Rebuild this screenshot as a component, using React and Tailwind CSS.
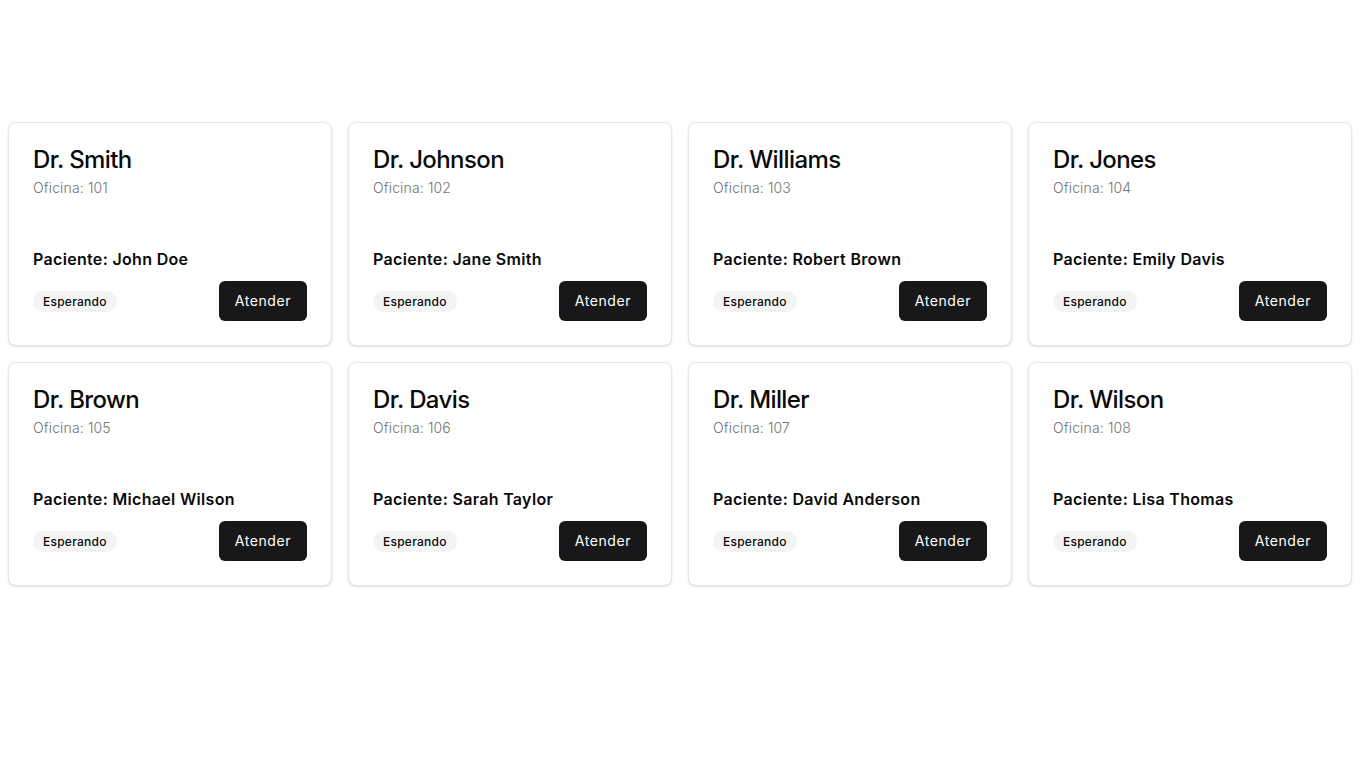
import React from 'react';

const offices = [
  { doctor: 'Dr. Smith', office: 101, patient: 'John Doe' },
  { doctor: 'Dr. Johnson', office: 102, patient: 'Jane Smith' },
  { doctor: 'Dr. Williams', office: 103, patient: 'Robert Brown' },
  { doctor: 'Dr. Jones', office: 104, patient: 'Emily Davis' },
  { doctor: 'Dr. Brown', office: 105, patient: 'Michael Wilson' },
  { doctor: 'Dr. Davis', office: 106, patient: 'Sarah Taylor' },
  { doctor: 'Dr. Miller', office: 107, patient: 'David Anderson' },
  { doctor: 'Dr. Wilson', office: 108, patient: 'Lisa Thomas' }
];

function OfficeCard({ doctor, office, patient }) {
  return (
    <div className="flex h-[224px] flex-col rounded-lg border border-[#e5e5e5] bg-white text-[#0a0a0a] shadow-sm">
      <div className="flex flex-col gap-1.5 px-6 pt-[25px]">
        <h3 className="text-2xl font-medium leading-none tracking-tight">{doctor}</h3>
        <p className="text-sm font-light tracking-[0.01em] text-[#737373]">Oficina: {office}</p>
      </div>
      <div className="mt-auto flex flex-col gap-2.5 px-6 pb-6">
        <p className="text-base font-semibold tracking-[0.02em]">Paciente: {patient}</p>
        <div className="flex items-center justify-between">
          <span className="rounded-full bg-[#f4f4f5] px-2.5 py-0.5 text-xs font-medium leading-[17px] tracking-[0.02em]">
            Esperando
          </span>
          <button className="h-10 rounded-md bg-[#18181b] px-4 text-sm font-normal tracking-[0.04em] text-white">
            Atender
          </button>
        </div>
      </div>
    </div>
  );
}

export default function App() {
  return (
    <div className="min-h-screen bg-white pl-2 pr-[14px] pt-[122px] font-['Inter','Liberation_Sans',sans-serif]">
      <div className="grid grid-cols-4 gap-4">
        {offices.map((item) => (
          <OfficeCard key={item.office} {...item} />
        ))}
      </div>
    </div>
  );
}
